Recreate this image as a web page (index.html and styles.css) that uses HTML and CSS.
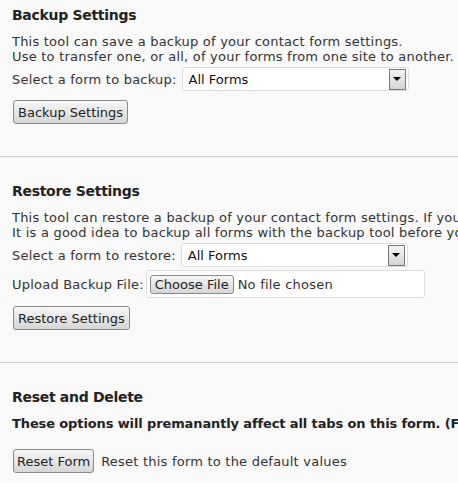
FILE: index.html
```html
<!DOCTYPE html>
<html>
<head>
<meta charset="utf-8">
<link rel="stylesheet" href="styles.css">
</head>
<body>
<div class="page">
  <div class="section first">
    <h3 class="title">Backup Settings</h3>
    <p class="desc">This tool can save a backup of your contact form settings.<br>Use to transfer one, or all, of your forms from one site to another. <span class="warn">Note: backups include all form data.</span></p>
    <div class="row row-select">
      <span class="label">Select a form to backup:</span>
      <div class="select"><span class="select-text">All Forms</span><span class="arrow"><span class="tri"></span></span></div>
    </div>
    <div class="row row-btn">
      <button class="btn">Backup Settings</button>
    </div>
  </div>
  <hr class="sep">
  <div class="section">
    <h3 class="title">Restore Settings</h3>
    <p class="desc">This tool can restore a backup of your contact form settings. If you restore a single form it will be added as a new form.<br>It is a good idea to backup all forms with the backup tool before you restore any settings.</p>
    <div class="row row-select">
      <span class="label">Select a form to restore:</span>
      <div class="select"><span class="select-text">All Forms</span><span class="arrow"><span class="tri"></span></span></div>
    </div>
    <div class="row row-file">
      <span class="label label-file">Upload Backup File:</span>
      <div class="file"><button class="file-btn">Choose File</button><span class="file-text">No file chosen</span></div>
    </div>
    <div class="row row-btn2">
      <button class="btn">Restore Settings</button>
    </div>
  </div>
  <hr class="sep">
  <div class="section">
    <h3 class="title">Reset and Delete</h3>
    <p class="strong">These options will premanantly affect all tabs on this form. (Form settings, fields and entries)</p>
    <div class="row row-reset">
      <button class="btn btn-reset">Reset Form</button>
      <span class="reset-text">Reset this form to the default values</span>
    </div>
  </div>
</div>
</body>
</html>
```

FILE: styles.css
```css
html, body {
  margin: 0;
  padding: 0;
  overflow: hidden;
  background: #f9f9f9;
}
body {
  font-family: "DejaVu Sans", Verdana, sans-serif;
  font-size: 13px;
  color: #333;
  letter-spacing: 0.22px;
}
.page {
  width: 458px;
  height: 483px;
  overflow: hidden;
}
.section {
  padding: 25px 0 0 12px;
  white-space: nowrap;
}
.section.first {
  padding-top: 6px;
}
.title {
  margin: 0;
  font-size: 14px;
  line-height: 18px;
  font-weight: bold;
  color: #222;
  letter-spacing: -0.3px;
}
.desc {
  margin: 10px 0 0;
  line-height: 15px;
}
.warn {
  color: #c98a1a;
}
.strong {
  margin: 10px 0 0;
  line-height: 15px;
  font-weight: bold;
  color: #222;
  letter-spacing: -0.12px;
}
.row {
  display: flex;
  align-items: center;
}
.row-select {
  margin-top: 3px;
  height: 24px;
}
.row-btn {
  margin-top: 9px;
  margin-left: 1px;
}
.row-file {
  margin-top: 3px;
  height: 28px;
}
.row-btn2 {
  margin-top: 8px;
  margin-left: 1px;
}
.row-reset {
  margin-top: 18px;
  margin-left: 1px;
}
.label {
  margin-right: 5px;
}
.label-file {
  margin-right: 2px;
}
.select {
  box-sizing: border-box;
  width: 227px;
  height: 24px;
  background: #fff;
  border: 1px solid #dcdcdc;
  border-radius: 3px;
  display: flex;
  align-items: center;
  justify-content: space-between;
  padding: 0 2px 0 6px;
  color: #111;
  letter-spacing: 0;
}
.arrow {
  box-sizing: border-box;
  width: 17px;
  height: 21px;
  border: 1px solid #777;
  background: linear-gradient(#f4f4f4, #d4d4d4);
  display: flex;
  align-items: center;
  justify-content: center;
}
.tri {
  width: 0;
  height: 0;
  border-left: 4px solid transparent;
  border-right: 4px solid transparent;
  border-top: 4px solid #000;
}
.file {
  box-sizing: border-box;
  width: 279px;
  height: 28px;
  background: #fff;
  border: 1px solid #dcdcdc;
  border-radius: 3px;
  display: flex;
  align-items: center;
  padding-left: 3px;
}
.file-btn {
  box-sizing: border-box;
  height: 19px;
  padding: 0 4px;
  font-family: "DejaVu Sans", Verdana, sans-serif;
  font-size: 13px;
  color: #222;
  background: linear-gradient(#f6f6f6, #d6d6d6);
  border: 1px solid #8a8a8a;
  border-radius: 3px;
}
.file-text {
  margin-left: 4px;
  color: #333;
}
.btn {
  box-sizing: border-box;
  height: 24px;
  padding: 0 4px;
  font-family: "DejaVu Sans", Verdana, sans-serif;
  font-size: 13px;
  color: #222;
  background: linear-gradient(#f6f6f6, #d6d6d6);
  border: 1px solid #8a8a8a;
  border-radius: 3px;
}
.btn-reset {
  padding: 0 3px;
}
.reset-text {
  margin-left: 7px;
}
.sep {
  margin: 32px 0 0;
  border: 0;
  height: 1px;
  background: #cfcfcf;
}
```
